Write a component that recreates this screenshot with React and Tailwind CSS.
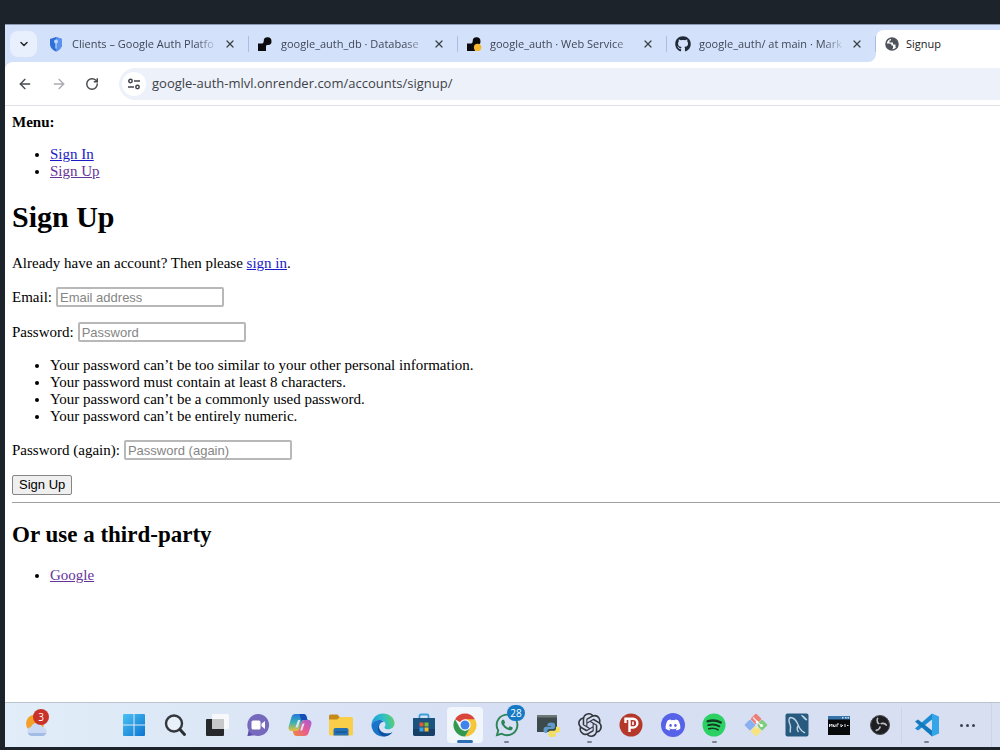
import { FaDiscord, FaGithub, FaWhatsapp } from 'react-icons/fa'
import { SiOpenai } from 'react-icons/si'
import { ArrowLeft, ArrowRight, ChevronDown, RotateCw, X } from 'lucide-react'

function ShieldIcon() {
  return (
    <svg className="w-4 h-4" viewBox="0 0 16 16">
      <path d="M8 1l6 2v5c0 3.500-2.500 6-6 7.500C4.500 14 2 11.500 2 8V3z" fill="#2f6fd8" />
      <path d="M8 1l6 2v5c0 3.500-2.500 6-6 7.500z" fill="#5b93ec" />
      <circle cx="8" cy="5.600" r="2" fill="#bcd6ff" />
      <path d="M7.400 7h1.200v5.500H7.400z" fill="#bcd6ff" />
    </svg>
  )
}

function RenderIcon({ dot }) {
  return (
    <svg className="w-4 h-4" viewBox="0 0 16 16">
      <path d="M1 7.500h4.200C6 7.500 6.500 7 6.700 5.300A3.900 3.900 0 1 1 11 9.100c-1.300 0-2 .4-2 1.500V15H1z" fill="#0b0b0d" />
      {dot && <circle cx="11.600" cy="11.400" r="3.700" fill="#f6b62d" />}
    </svg>
  )
}

function GlobeIcon() {
  return (
    <svg className="w-4 h-4" viewBox="0 0 16 16">
      <circle cx="8" cy="8" r="6" fill="#fff" stroke="#50545a" strokeWidth="1.600" />
      <path d="M2 7.500h3.500c1.500 0 2 .8 2 2h1.500V12L8 14C4.500 14 2 11 2 7.500z" fill="#50545a" />
      <path d="M7 2v2.500H5.500V6.500H9V8.500h2.500v2.500l1.500.5C14.500 9 14.500 6 12.500 4 11 2.500 9 2 7 2z" fill="#50545a" />
    </svg>
  )
}

function SiteInfoIcon() {
  return (
    <svg className="w-4 h-4" viewBox="0 0 16 16" fill="none" stroke="#3f4348" strokeWidth="1.500">
      <circle cx="4.500" cy="5" r="1.700" />
      <path d="M8 5h6M2 11h6" />
      <circle cx="11.500" cy="11" r="1.700" />
    </svg>
  )
}

function WeatherIcon() {
  return (
    <svg className="w-6 h-6" viewBox="0 0 24 24">
      <circle cx="10" cy="10.500" r="9" fill="#f3a029" />
      <path d="M6.500 23a4.500 4.500 0 0 1-.5-8.900 6 6 0 0 1 11.300 0A4.500 4.500 0 0 1 18 23z" fill="#cbdaf4" />
      <path d="M6.500 23a4 4 0 0 1-3.500-3h18a4 4 0 0 1-3 3z" fill="#a3bce6" />
    </svg>
  )
}

function StartIcon() {
  return (
    <svg className="w-6 h-6" viewBox="0 0 24 24">
      <defs>
        <linearGradient id="win" x1="0" y1="0" x2="1" y2="1">
          <stop offset="0" stopColor="#4cc2f5" />
          <stop offset="1" stopColor="#0b74cf" />
        </linearGradient>
      </defs>
      <path d="M1 2a1 1 0 0 1 1-1h9.500v10.500H1zM12.500 1H22a1 1 0 0 1 1 1v9.500H12.500zM1 12.500h10.500V23H2a1 1 0 0 1-1-1zM12.500 12.500H23V22a1 1 0 0 1-1 1h-9.500z" fill="url(#win)" />
    </svg>
  )
}

function SearchIcon() {
  return (
    <svg className="w-6 h-6" viewBox="0 0 24 24">
      <circle cx="11" cy="10.500" r="8" fill="#e8f0fa" stroke="#34373c" strokeWidth="2.400" />
      <path d="M17 16.500L21.500 21.500" stroke="#2a2d31" strokeWidth="3" strokeLinecap="round" />
    </svg>
  )
}

function TaskViewIcon() {
  return (
    <svg className="w-6 h-6" viewBox="0 0 24 24">
      <rect x="1" y="6" width="18" height="17" rx="1" fill="#26282b" />
      <rect x="7" y="1" width="17" height="15" rx="1.500" fill="#f7f8fa" />
      <path d="M7 6h12v10H8.500A1.500 1.500 0 0 1 7 14.500z" fill="#c6c8ca" />
    </svg>
  )
}

function ChatIcon() {
  return (
    <svg className="w-6 h-6" viewBox="0 0 24 24">
      <path d="M12 1a11 11 0 1 1-4.500 21L1.500 23l1-6A11 11 0 0 1 12 1z" fill="#7568bd" />
      <path d="M3 18.500A11 11 0 0 0 22 16 11 11 0 0 1 7.500 22L1.500 23z" fill="#5a4ba8" />
      <rect x="5.500" y="7.500" width="9" height="9" rx="1.500" fill="#fff" />
      <path d="M15.500 10.800L19 8v8l-3.500-2.800z" fill="#fff" />
    </svg>
  )
}

function CopilotIcon() {
  return (
    <svg className="w-6 h-6" viewBox="0 0 24 24">
      <defs>
        <linearGradient id="copA" x1="0" y1="0" x2="0" y2="1">
          <stop offset="0" stopColor="#2378dc" />
          <stop offset="0.500" stopColor="#39b1b0" />
          <stop offset="1" stopColor="#e8c13a" />
        </linearGradient>
        <linearGradient id="copB" x1="0" y1="1" x2="1" y2="0">
          <stop offset="0" stopColor="#f08a3c" />
          <stop offset="0.500" stopColor="#e85b8e" />
          <stop offset="1" stopColor="#a55cdd" />
        </linearGradient>
      </defs>
      <path d="M7.500 1h8c1.800 0 2.500 1 3 2.500L19.500 7h-3c-1.500 0-2.300.8-2.800 2.400l-2 6.300C11 17.300 10 18 8.500 18H4c-3 0-4-2-3.200-5L3.500 4C4.100 2 5.500 1 7.500 1zM10 7l-2.500 7.500h1.300c.8 0 1.200-.3 1.500-1.200L12.200 7z" fillRule="evenodd" fill="url(#copA)" />
      <path d="M16.500 23h-8c-1.800 0-2.500-1-3-2.500L4.800 18h3.700c1.500 0 2.500-.8 3-2.400l2-6.300C14 7.700 15 7 16.500 7H20c3 0 4 2 3.200 5l-2.700 8c-.6 2-2 3-4 3zM14.200 17.500l2.300-7h-1c-.8 0-1.200.3-1.500 1.200l-1.800 5.800z" fillRule="evenodd" fill="url(#copB)" />
      <path d="M11.500 1h4c1.800 0 2.500 1 3 2.500L19.500 7h-4c-1 0-1.700.3-2.200 1z" fill="#174db6" />
    </svg>
  )
}

function FolderIcon() {
  return (
    <svg className="w-6 h-6" viewBox="0 0 24 24">
      <path d="M0 3a1.500 1.500 0 0 1 1.500-1.500h7L11 4.500V9H0z" fill="#c58a18" />
      <path d="M0 6.500h8L11 4h11.500A1.500 1.500 0 0 1 24 5.500V21a1.500 1.500 0 0 1-1.500 1.500h-21A1.500 1.500 0 0 1 0 21z" fill="#fbce4a" />
      <path d="M4.500 22.500V17a2 2 0 0 1 2-2h11a2 2 0 0 1 2 2v5.500z" fill="#2470b4" />
      <path d="M6.500 18.500h11v1.200h-11z" fill="#174f88" />
    </svg>
  )
}

function EdgeIcon() {
  return (
    <svg className="w-6 h-6" viewBox="0 0 24 24">
      <defs>
        <linearGradient id="edgeTop" x1="0" y1="0.500" x2="1" y2="0.300">
          <stop offset="0" stopColor="#1e9be0" />
          <stop offset="0.550" stopColor="#30bfc4" />
          <stop offset="1" stopColor="#5ed066" />
        </linearGradient>
      </defs>
      <path d="M.5 11.500C1 5 6 .5 12 .5c6.500 0 11.500 4.500 11.500 9.800 0 3.700-3 6-6 6-2.500 0-4-.9-4-1.900 0-.8 1-1.100 1-2.900 0-2.500-2.500-4.500-5.500-4.500-4 0-7 2-8.500 4.500z" fill="url(#edgeTop)" />
      <path d="M.5 11.500C2 8.500 5 7 8.500 7c2 0 3.500.7 4.500 1.700-3 .2-5 2.600-5 5.300 0 4 4 6.500 8 6.500 2.200 0 4-.5 5.500-1.500C19.500 22 16 23.500 12 23.500 5.500 23.500.3 18 .5 11.500z" fill="#1873c9" />
      <path d="M10 10c-2.500 2-3.500 4-3 7 .5 2.700 2.800 5.500 6 6.400 3.800-.2 6.600-1.900 8.500-4.400-1.500 1-3.300 1.500-5.500 1.500-4 0-8-2.500-8-6.500 0-1.500.7-3 2-4z" fill="#0f4f9f" />
    </svg>
  )
}

function StoreIcon() {
  return (
    <svg className="w-6 h-6" viewBox="0 0 24 24">
      <path d="M7.500 6V3A1.500 1.500 0 0 1 9 1.500h6A1.500 1.500 0 0 1 16.500 3v3" fill="none" stroke="#3d9fd8" strokeWidth="1.800" />
      <path d="M1 5h22v15.500a2.500 2.500 0 0 1-2.500 2.500h-17A2.500 2.500 0 0 1 1 20.500z" fill="#1c5280" />
      <path d="M1 16h22v4.500a2.500 2.500 0 0 1-2.500 2.500h-17A2.500 2.500 0 0 1 1 20.500z" fill="#173f68" />
      <path d="M7.500 9.500h4v4h-4z" fill="#e2593a" />
      <path d="M12.500 9.500h4v4h-4z" fill="#7dbb36" />
      <path d="M7.500 14.500h4v4h-4z" fill="#36a3e6" />
      <path d="M12.500 14.500h4v4h-4z" fill="#f3b92c" />
    </svg>
  )
}

function ChromeIcon() {
  return (
    <svg className="w-6 h-6" viewBox="0 0 24 24">
      <path d="M12 12L2.040 6.250a11.500 11.500 0 0 1 19.920 0z" fill="#d9453a" />
      <path d="M12 6.250h9.960A11.500 11.500 0 0 1 12 23.500l5-8.600z" fill="#f6c63a" />
      <path d="M2.040 6.250L7 14.900l5 2.900 5-2.900-5 8.600A11.500 11.500 0 0 1 2.040 6.250z" fill="#33994f" />
      <circle cx="12" cy="12" r="5.700" fill="#fff" />
      <circle cx="12" cy="12" r="4.500" fill="#4083ec" />
    </svg>
  )
}

function PythonFileIcon() {
  return (
    <svg className="w-6 h-6" viewBox="0 0 24 24">
      <path d="M1 2h20v17H1z" fill="#3c4a4b" />
      <path d="M1 2h20v2.500H1z" fill="#6d7777" />
      <path d="M15 9.500c-3 0-3.500 1-3.500 2.300V13H15v.7h-5c-1.700 0-2.500 1.300-2.500 3.300s.8 3 2.300 3h1.400v-1.500c0-1.500 1-2.500 2.600-2.500H17c1.300 0 2-.8 2-2v-2.200c0-1.500-1.200-2.300-4-2.300z" fill="#5f9aca" />
      <path d="M16.500 24c3 0 3.500-1 3.500-2.300V20.500h-3.500v-.7h5c1.700 0 2.500-1 2.500-3s-.8-3-2.300-3H20v1.700c0 1.500-1 2.300-2.600 2.300H14.500c-1.300 0-2 .8-2 2v1.900c0 1.500 1.200 2.300 4 2.300z" fill="#f3df5b" />
    </svg>
  )
}

function PsiphonIcon() {
  return (
    <svg className="w-6 h-6" viewBox="0 0 24 24">
      <circle cx="12" cy="12" r="11.500" fill="#b5392b" />
      <path d="M6.500 10V5.800H14a4.300 4.300 0 0 1 0 8.700h-3.500M10.500 6v13" fill="none" stroke="#fff" strokeWidth="2.400" />
      <path d="M14 8.500v3.500" stroke="#fff" strokeWidth="1.600" />
    </svg>
  )
}

function DiscordIcon() {
  return (
    <span className="w-6 h-6 rounded-full bg-[#5662e8] flex items-center justify-center">
      <FaDiscord className="w-4 h-4 text-white" />
    </span>
  )
}

function SpotifyIcon() {
  return (
    <svg className="w-6 h-6" viewBox="0 0 24 24">
      <circle cx="12" cy="12" r="11.500" fill="#2bd163" />
      <g fill="none" stroke="#123a20" strokeLinecap="round">
        <path d="M5.500 8.300c4.500-1.300 9.500-.9 13.300 1.200" strokeWidth="2.300" />
        <path d="M6.200 12.200c3.800-1.100 7.900-.7 11.200 1.100" strokeWidth="1.900" />
        <path d="M6.800 15.800c3.200-.9 6.500-.6 9.200 1" strokeWidth="1.600" />
      </g>
    </svg>
  )
}

function GitIcon() {
  return (
    <svg className="w-6 h-6" viewBox="0 0 24 24">
      <rect x="8" y="2" width="8" height="8" rx="1" transform="rotate(45 12 6)" fill="#ee7f76" />
      <rect x="2" y="8" width="8" height="8" rx="1" transform="rotate(45 6 12)" fill="#8ab0f4" />
      <rect x="14" y="8" width="8" height="8" rx="1" transform="rotate(45 18 12)" fill="#7fce7b" />
      <rect x="8" y="14" width="8" height="8" rx="1" transform="rotate(45 12 18)" fill="#f6e382" />
      <path d="M9 4.500l4 4v7M13 8.500l4 4" fill="none" stroke="#e8ecf8" strokeWidth="1.300" />
      <circle cx="13" cy="9" r="1.300" fill="#fff" />
      <circle cx="17.500" cy="12.500" r="1.500" fill="#fff" />
    </svg>
  )
}

function MysqlIcon() {
  return (
    <svg className="w-6 h-6" viewBox="0 0 24 24">
      <rect x="0.500" y="0.500" width="23" height="23" rx="2" fill="#285a7f" />
      <path d="M5.500 19.500C4.500 17 6.500 15 5 11.500 3.500 8.500 3.500 5 5.500 4.500c3 0 6 3.500 7.500 7 1 2.500 1.500 4.500 4 6.500l3 2M13 13c-1 1.500-1 4 .5 6" fill="none" stroke="#c0d5e4" strokeWidth="1.400" />
      <path d="M16.500 2.500c2 .5 4 2 5.500 4.500l-2-.5z" fill="#c0d5e4" stroke="#c0d5e4" />
    </svg>
  )
}

function TerminalIcon() {
  return (
    <svg className="w-6 h-6" viewBox="0 0 24 24">
      <path d="M1 3h22v19H1z" fill="#08090b" />
      <path d="M1 3h22v3.500H1z" fill="#3473ac" />
      <path d="M15 4h1.500v1.500H15zM18 4h1.500v1.500H18zM20.500 4H22v1.500h-1.500z" fill="#cfe2f3" />
      <path d="M2.500 14v-3l1.300 1.500L5 11v3M6.500 11.500v2h1.700v-2M10 11h2M10 11v3M14 11v3l2-2M18 11v3M20 12.500h1.500" fill="none" stroke="#e1e3e5" strokeWidth="1" />
    </svg>
  )
}

function ObsIcon() {
  return (
    <svg className="w-6 h-6" viewBox="0 0 24 24">
      <circle cx="12" cy="12" r="9.500" fill="#1f1f22" stroke="#4a4a50" strokeWidth="1" />
      <g fill="none" stroke="#b9babf" strokeWidth="1.700" strokeLinecap="round">
        <path d="M12 11.500C9.500 10.500 8.500 8 9.500 5.500" />
        <path d="M12 11.500C14 9.700 16.800 10 18.300 12" />
        <path d="M12 11.500C12.500 14.500 11 16.800 8.300 17.300" />
      </g>
      <circle cx="12" cy="12" r="1.500" fill="#1f1f22" />
    </svg>
  )
}

function VscodeIcon() {
  return (
    <svg className="w-6 h-6" viewBox="0 0 24 24">
      <path d="M17 .5v6L3 17.500 0 15.500z" fill="#1a8bd3" />
      <path d="M17 23.500v-6L3 6.500 0 8.500z" fill="#1478bd" />
      <path d="M17 .5l7 3v17l-7 3z" fill="#35a5ea" />
    </svg>
  )
}

const tabs = [
  { title: 'Clients – Google Auth Platfo', icon: <ShieldIcon /> },
  { title: 'google_auth_db · Database', icon: <RenderIcon /> },
  { title: 'google_auth · Web Service', icon: <RenderIcon dot /> },
  { title: 'google_auth/ at main · Mark', icon: <FaGithub className="w-4 h-4 text-[#1f2937]" /> },
]

const apps = [
  { name: 'Start', icon: <StartIcon /> },
  { name: 'Search', icon: <SearchIcon /> },
  { name: 'Task view', icon: <TaskViewIcon /> },
  { name: 'Chat', icon: <ChatIcon /> },
  { name: 'Copilot', icon: <CopilotIcon /> },
  { name: 'File Explorer', icon: <FolderIcon /> },
  { name: 'Edge', icon: <EdgeIcon /> },
  { name: 'Store', icon: <StoreIcon /> },
  { name: 'Chrome', icon: <ChromeIcon />, active: true },
  { name: 'WhatsApp', icon: <FaWhatsapp className="w-[26px] h-[26px] text-[#2c8457]" />, running: true, badge: '28' },
  { name: 'Python', icon: <PythonFileIcon /> },
  { name: 'ChatGPT', icon: <SiOpenai className="w-6 h-6 text-[#33363c]" />, running: true },
  { name: 'Psiphon', icon: <PsiphonIcon /> },
  { name: 'Discord', icon: <DiscordIcon /> },
  { name: 'Spotify', icon: <SpotifyIcon />, running: true },
  { name: 'Git', icon: <GitIcon /> },
  { name: 'MySQL Workbench', icon: <MysqlIcon /> },
  { name: 'MySQL Command Line', icon: <TerminalIcon /> },
  { name: 'OBS Studio', icon: <ObsIcon /> },
]

const rules = [
  'Your password can’t be too similar to your other personal information.',
  'Your password must contain at least 8 characters.',
  'Your password can’t be a commonly used password.',
  'Your password can’t be entirely numeric.',
]

function Tab({ title, icon }) {
  return (
    <div className="w-[209px] h-8 pb-1 flex items-center shrink-0">
      <button className="flex items-center gap-2 pl-2 text-left">
        <span className="shrink-0">{icon}</span>
        <span className="w-[146px] whitespace-nowrap mask-r-from-85%">{title}</span>
      </button>
      <button aria-label="Close tab" className="ml-1 w-4 h-4 flex items-center justify-center shrink-0">
        <X className="w-3 h-3 text-[#3c4043]" strokeWidth={2.500} />
      </button>
      <span className="ml-auto w-px h-4 bg-[#a9bde6]" />
    </div>
  )
}

function TaskButton({ name, icon, active, running, badge }) {
  return (
    <button
      aria-label={name}
      className={`relative w-9 h-9 rounded flex items-center justify-center ${active ? 'bg-[#f1f5fc]' : ''}`}
    >
      {icon}
      {badge && (
        <span className="absolute -top-0.5 right-0 w-[18px] h-4 rounded-full bg-[#1579c4] text-white text-[10px] leading-4 text-center">
          {badge}
        </span>
      )}
      {active && <span className="absolute bottom-0 w-4 h-[3px] rounded-full bg-[#2e6fb4]" />}
      {running && <span className="absolute bottom-0 w-[5px] h-[2px] rounded-full bg-[#7c8290]" />}
    </button>
  )
}

function Field({ id, label, type }) {
  return (
    <p className="my-[15px] flex items-center gap-1">
      <label htmlFor={id}>{label}:</label>
      <input
        id={id}
        type={type}
        placeholder={label === 'Email' ? 'Email address' : label}
        className="w-[168px] h-5 px-[2px] border-2 border-[#b8b8b8] rounded-xs font-['Liberation_Sans',sans-serif] text-[13px] placeholder:text-[#858585]"
      />
    </p>
  )
}

export default function App() {
  return (
    <div className="min-h-screen flex flex-col bg-[#1c232a] pt-6 pl-[5px] pb-[3px] overflow-x-hidden font-['Open_Sans',sans-serif]">
      <header className="bg-[#d3e1fb] border-t border-[#8d99ae]">
        <div className="h-[37px] flex items-end text-[11px] text-[#3f4756]">
          <button aria-label="Search tabs" className="ml-[5px] mr-[3px] mb-[5px] w-[27px] h-[26px] rounded-lg bg-[#e8effd] flex items-center justify-center shrink-0">
            <ChevronDown className="w-3 h-3 text-[#25282c]" strokeWidth={3} />
          </button>
          {tabs.map((tab) => (
            <Tab key={tab.title} {...tab} />
          ))}
          <div className="relative flex-1 h-8 pl-2 pb-1 flex items-center bg-white rounded-tl-lg">
            <svg className="absolute -left-2 bottom-0 w-2 h-2" viewBox="0 0 8 8">
              <path d="M8 0v8H0a8 8 0 0 0 8-8z" fill="#fff" />
            </svg>
            <button className="flex items-center gap-1.5 text-[#202124]">
              <GlobeIcon />
              Signup
            </button>
          </div>
        </div>
        <div className="h-11 bg-white rounded-tl-lg border-b border-[#dfe1e6] flex items-center pl-3">
          <button aria-label="Back" className="w-[34px]">
            <ArrowLeft className="w-4 h-4 text-[#45494e]" />
          </button>
          <button aria-label="Forward" className="w-[34px]">
            <ArrowRight className="w-4 h-4 text-[#a9abae]" />
          </button>
          <button aria-label="Reload" className="w-[34px]">
            <RotateCw className="w-3.5 h-3.5 text-[#45494e]" strokeWidth={2.500} />
          </button>
          <div className="flex-1 h-8 rounded-l-full bg-[#edf1fa] flex items-center pl-[3px]">
            <button aria-label="Site information" className="w-6 h-6 rounded-full bg-white flex items-center justify-center shrink-0">
              <SiteInfoIcon />
            </button>
            <input
              aria-label="Address"
              defaultValue="google-auth-mlvl.onrender.com/accounts/signup/"
              className="flex-1 ml-1.5 bg-transparent text-[13px] text-[#3e4247] outline-none"
            />
          </div>
        </div>
      </header>

      <main className="flex-1 bg-white pt-2 pl-[7px] text-black text-[15px] leading-[17px] font-['Liberation_Serif',serif]">
        <strong className="block">Menu:</strong>
        <ul className="my-[15px] pl-[38px] list-disc">
          <li><a href="#signin" className="underline text-[#1a1ac8]">Sign In</a></li>
          <li><a href="#signup" className="underline text-[#663399]">Sign Up</a></li>
        </ul>

        <h1 className="mt-5 mb-[21px] text-[30px] leading-[34px] font-bold">Sign Up</h1>
        <p className="my-[15px]">
          Already have an account? Then please <a href="#signin" className="underline text-[#1a1ac8]">sign in</a>.
        </p>

        <form onSubmit={(e) => e.preventDefault()}>
          <Field id="email" label="Email" type="email" />
          <Field id="password1" label="Password" type="password" />
          <ul className="my-[15px] pl-[38px] list-disc">
            {rules.map((rule) => (
              <li key={rule}>{rule}</li>
            ))}
          </ul>
          <Field id="password2" label="Password (again)" type="password" />
          <button className="block h-5 px-[6px] border border-[#858585] rounded-xs bg-[#efefef] font-['Liberation_Sans',sans-serif] text-[13px] leading-4">
            Sign Up
          </button>
        </form>

        <hr className="mt-[7px] mb-[19px] border-t border-[#a0a0a0]" />

        <h2 className="mb-[19px] text-[23px] leading-[26px] font-bold">Or use a third-party</h2>
        <ul className="pl-[38px] list-disc">
          <li><a href="#google" className="underline text-[#663399]">Google</a></li>
        </ul>
      </main>

      <footer className="h-[45px] flex items-center border-t border-[#bcc3cf] bg-linear-to-r from-[#e1edf8] via-[#d6dff4] to-[#d8dff1]">
        <div className="w-[108px] pl-5 shrink-0">
          <button aria-label="Weather" className="relative block">
            <WeatherIcon />
            <span className="absolute -top-1 right-0 w-4 h-4 rounded-full bg-[#c93229] text-white text-[10px] leading-4 text-center">
              3
            </span>
          </button>
        </div>
        <nav className="flex-1 flex">
          {apps.map((app) => (
            <div key={app.name} className="flex-1 flex justify-center">
              <TaskButton {...app} />
            </div>
          ))}
        </nav>
        <div className="w-[50px] flex justify-center border-l border-[#ccd4e8]">
          <TaskButton name="Visual Studio Code" icon={<VscodeIcon />} running />
        </div>
        <button aria-label="More apps" className="w-8 h-9 flex items-center justify-center gap-[3px]">
          <span className="w-[3px] h-[3px] rounded-full bg-[#3c4250]" />
          <span className="w-[3px] h-[3px] rounded-full bg-[#3c4250]" />
          <span className="w-[3px] h-[3px] rounded-full bg-[#3c4250]" />
        </button>
        <span className="ml-2 mr-2 w-px self-stretch bg-[#ccd4e8]" />
      </footer>
    </div>
  )
}
